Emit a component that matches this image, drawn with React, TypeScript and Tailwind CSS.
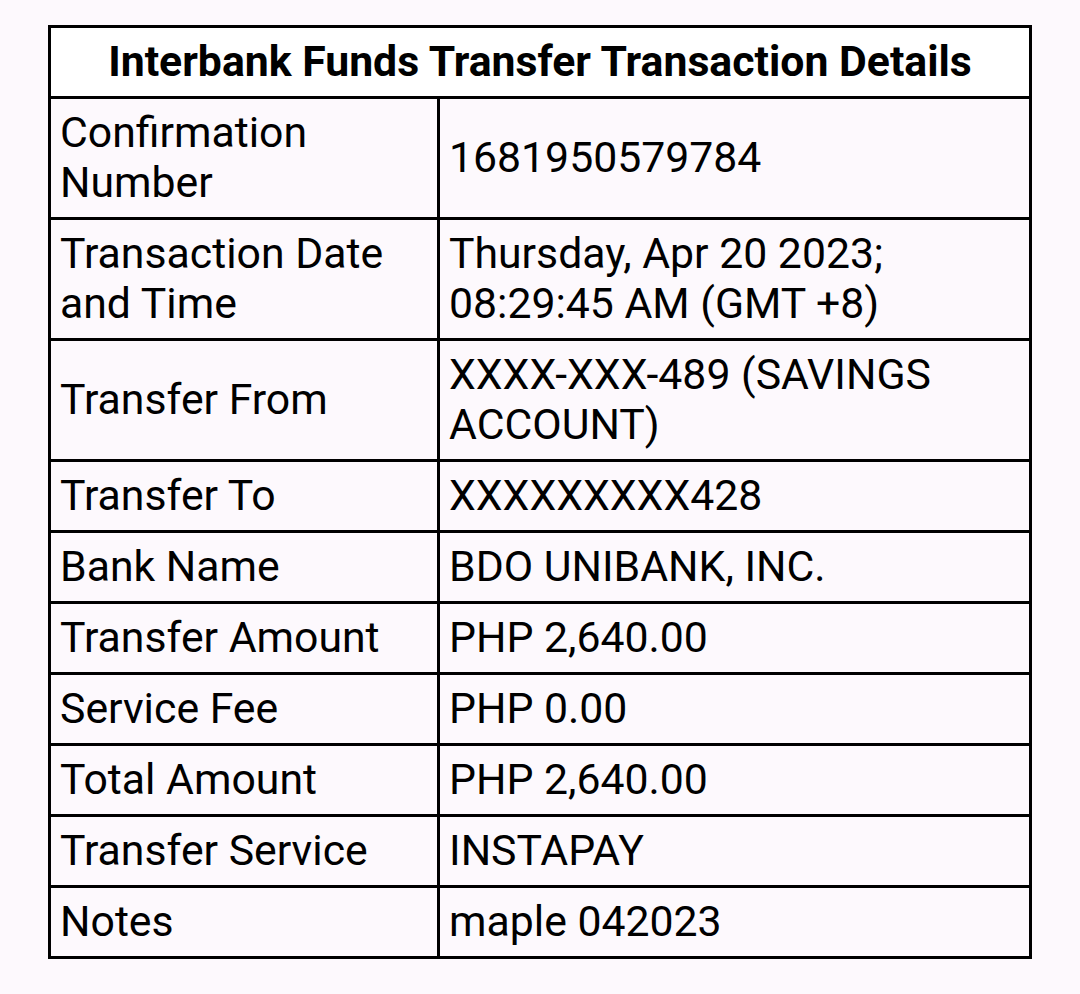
const rows: { label: string; value: string }[] = [
  { label: "Confirmation Number", value: "1681950579784" },
  { label: "Transaction Date and Time", value: "Thursday, Apr 20 2023; 08:29:45 AM (GMT +8)" },
  { label: "Transfer From", value: "XXXX-XXX-489 (SAVINGS ACCOUNT)" },
  { label: "Transfer To", value: "XXXXXXXXX428" },
  { label: "Bank Name", value: "BDO UNIBANK, INC." },
  { label: "Transfer Amount", value: "PHP 2,640.00" },
  { label: "Service Fee", value: "PHP 0.00" },
  { label: "Total Amount", value: "PHP 2,640.00" },
  { label: "Transfer Service", value: "INSTAPAY" },
  { label: "Notes", value: "maple 042023" },
];

export default function App() {
  return (
    <div className="min-h-[994px] w-[1080px] bg-[#fdf9fd] pl-[48px] pt-[25px] font-['Roboto',sans-serif] text-black">
      <table className="w-[984px] table-fixed border-collapse border-[3px] border-black">
        <colgroup>
          <col className="w-[389px]" />
          <col className="w-[592px]" />
        </colgroup>
        <thead>
          <tr>
            <th
              colSpan={2}
              className="border-[3px] border-black bg-white px-[9px] pt-[8px] pb-[10px] text-center text-[42.75px] font-bold leading-[50px]"
            >
              Interbank Funds Transfer Transaction Details
            </th>
          </tr>
        </thead>
        <tbody>
          {rows.map((r) => (
            <tr key={r.label}>
              <td className="border-[3px] border-black px-[9px] pt-[8px] pb-[10px] align-middle text-[42.75px] leading-[50px]">
                {r.label}
              </td>
              <td className="border-[3px] border-black px-[9px] pt-[8px] pb-[10px] align-middle text-[42.75px] leading-[50px]">
                {r.value}
              </td>
            </tr>
          ))}
        </tbody>
      </table>
    </div>
  );
}
